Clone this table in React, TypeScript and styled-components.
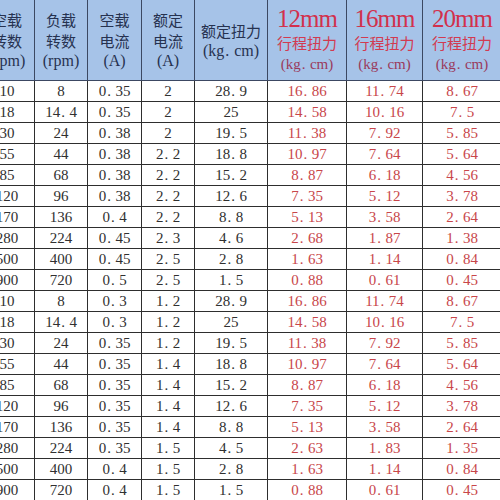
import React from 'react';
import styled, { createGlobalStyle } from 'styled-components';

const GlobalStyle = createGlobalStyle`
	html, body {
		margin: 0;
		padding: 0;
		background: #ffffff;
		overflow: hidden;
	}
`;

const Page = styled.div`
	width: 500px;
	height: 500px;
	overflow: hidden;
	background: #ffffff;
`;

const Table = styled.table`
	margin-left: -21px;
	margin-top: -1px;
	border-collapse: collapse;
	table-layout: fixed;
	width: 522px;
	font-family: "Liberation Serif", "Noto Sans CJK SC", serif;
`;

const HeadCell = styled.th`
	height: 80px;
	padding: 0;
	background: #a6c3e8;
	border: 1px solid #3c4862;
	color: #263250;
	font-weight: normal;
	font-size: 16px;
	line-height: 21px;
	text-align: center;
	vertical-align: middle;
`;

const HeadLine = styled.div`
	font-family: "Noto Sans CJK SC", sans-serif;
	font-size: 15px;
	line-height: 21px;
`;

const UnitLine = styled.div`
	font-family: "Liberation Serif", serif;
	font-size: 16px;
	line-height: 20px;
`;

const SizeLine = styled.div`
	font-family: "Liberation Serif", serif;
	font-size: 25px;
	line-height: 26px;
	letter-spacing: -1px;
	color: #d2304c;
`;

const RedHeadLine = styled(HeadLine)`
	color: #d23a50;
	line-height: 22px;
`;

const RedUnitLine = styled(UnitLine)`
	color: #9a3a5c;
	font-size: 15px;
	line-height: 20px;
`;

const Cell = styled.td<{ $red?: boolean }>`
	height: 20px;
	padding: 0;
	border: 1px solid #2e2e2e;
	background: #ffffff;
	color: ${p => (p.$red ? '#c8464a' : '#303030')};
	font-size: 15px;
	line-height: 20px;
	text-align: center;
	white-space: nowrap;
`;

const Dot = styled.span`
	display: inline-block;
	width: 0.55em;
	text-align: left;
	padding-left: 1px;
`;

const Num = (props: { value: string }) => {
	const parts = props.value.split('.');
	if (parts.length === 1) {
		return <>{props.value}</>;
	}
	return (
		<>
			{parts[0]}<Dot>.</Dot>{parts[1]}
		</>
	);
}

const widths = [55, 53, 54, 53, 73, 79, 76, 79];

const speed = ['10', '18', '30', '55', '85', '120', '170', '280', '500', '900'];
const load = ['8', '14.4', '24', '44', '68', '96', '136', '224', '400', '720'];

const groupA = {
	idle: ['0.35', '0.35', '0.38', '0.38', '0.38', '0.38', '0.4', '0.45', '0.45', '0.5'],
	rated: ['2', '2', '2', '2.2', '2.2', '2.2', '2.2', '2.3', '2.5', '2.5'],
	torque: ['28.9', '25', '19.5', '18.8', '15.2', '12.6', '8.8', '4.6', '2.8', '1.5'],
	t12: ['16.86', '14.58', '11.38', '10.97', '8.87', '7.35', '5.13', '2.68', '1.63', '0.88'],
	t16: ['11.74', '10.16', '7.92', '7.64', '6.18', '5.12', '3.58', '1.87', '1.14', '0.61'],
	t20: ['8.67', '7.5', '5.85', '5.64', '4.56', '3.78', '2.64', '1.38', '0.84', '0.45'],
};

const groupB = {
	idle: ['0.3', '0.3', '0.35', '0.35', '0.35', '0.35', '0.35', '0.35', '0.4', '0.4'],
	rated: ['1.2', '1.2', '1.2', '1.4', '1.4', '1.4', '1.4', '1.5', '1.5', '1.5'],
	torque: ['28.9', '25', '19.5', '18.8', '15.2', '12.6', '8.8', '4.5', '2.8', '1.5'],
	t12: ['16.86', '14.58', '11.38', '10.97', '8.87', '7.35', '5.13', '2.63', '1.63', '0.88'],
	t16: ['11.74', '10.16', '7.92', '7.64', '6.18', '5.12', '3.58', '1.83', '1.14', '0.61'],
	t20: ['8.67', '7.5', '5.85', '5.64', '4.56', '3.78', '2.64', '1.35', '0.84', '0.45'],
};

type Group = typeof groupA;

const rowsOf = (g: Group) =>
	speed.map((s, i) => [s, load[i], g.idle[i], g.rated[i], g.torque[i], g.t12[i], g.t16[i], g.t20[i]]);

const rows = [...rowsOf(groupA), ...rowsOf(groupB)];

const PlainHead = (props: { lines: string[]; unit: string }) => {
	return (
		<HeadCell>
			{props.lines.map(l => <HeadLine key={l}>{l}</HeadLine>)}
			<UnitLine>{props.unit}</UnitLine>
		</HeadCell>
	);
}

const StrokeHead = (props: { size: string }) => {
	return (
		<HeadCell>
			<SizeLine>{props.size}</SizeLine>
			<RedHeadLine>行程扭力</RedHeadLine>
			<RedUnitLine>(kg<Dot>.</Dot>cm)</RedUnitLine>
		</HeadCell>
	);
}

export default function App() {
	return (
		<Page>
			<GlobalStyle />
			<Table>
				<colgroup>
					{widths.map((w, i) => <col key={i} style={{ width: w }} />)}
				</colgroup>
				<thead>
					<tr>
						<PlainHead lines={['空载', '转数']} unit="(rpm)" />
						<PlainHead lines={['负载', '转数']} unit="(rpm)" />
						<PlainHead lines={['空载', '电流']} unit="(A)" />
						<PlainHead lines={['额定', '电流']} unit="(A)" />
						<HeadCell>
							<HeadLine>额定扭力</HeadLine>
							<UnitLine>(kg<Dot>.</Dot>cm)</UnitLine>
						</HeadCell>
						<StrokeHead size="12mm" />
						<StrokeHead size="16mm" />
						<StrokeHead size="20mm" />
					</tr>
				</thead>
				<tbody>
					{rows.map((r, i) => (
						<tr key={i}>
							{r.map((v, j) => (
								<Cell key={j} $red={j >= 5}><Num value={v} /></Cell>
							))}
						</tr>
					))}
				</tbody>
			</Table>
		</Page>
	);
}
